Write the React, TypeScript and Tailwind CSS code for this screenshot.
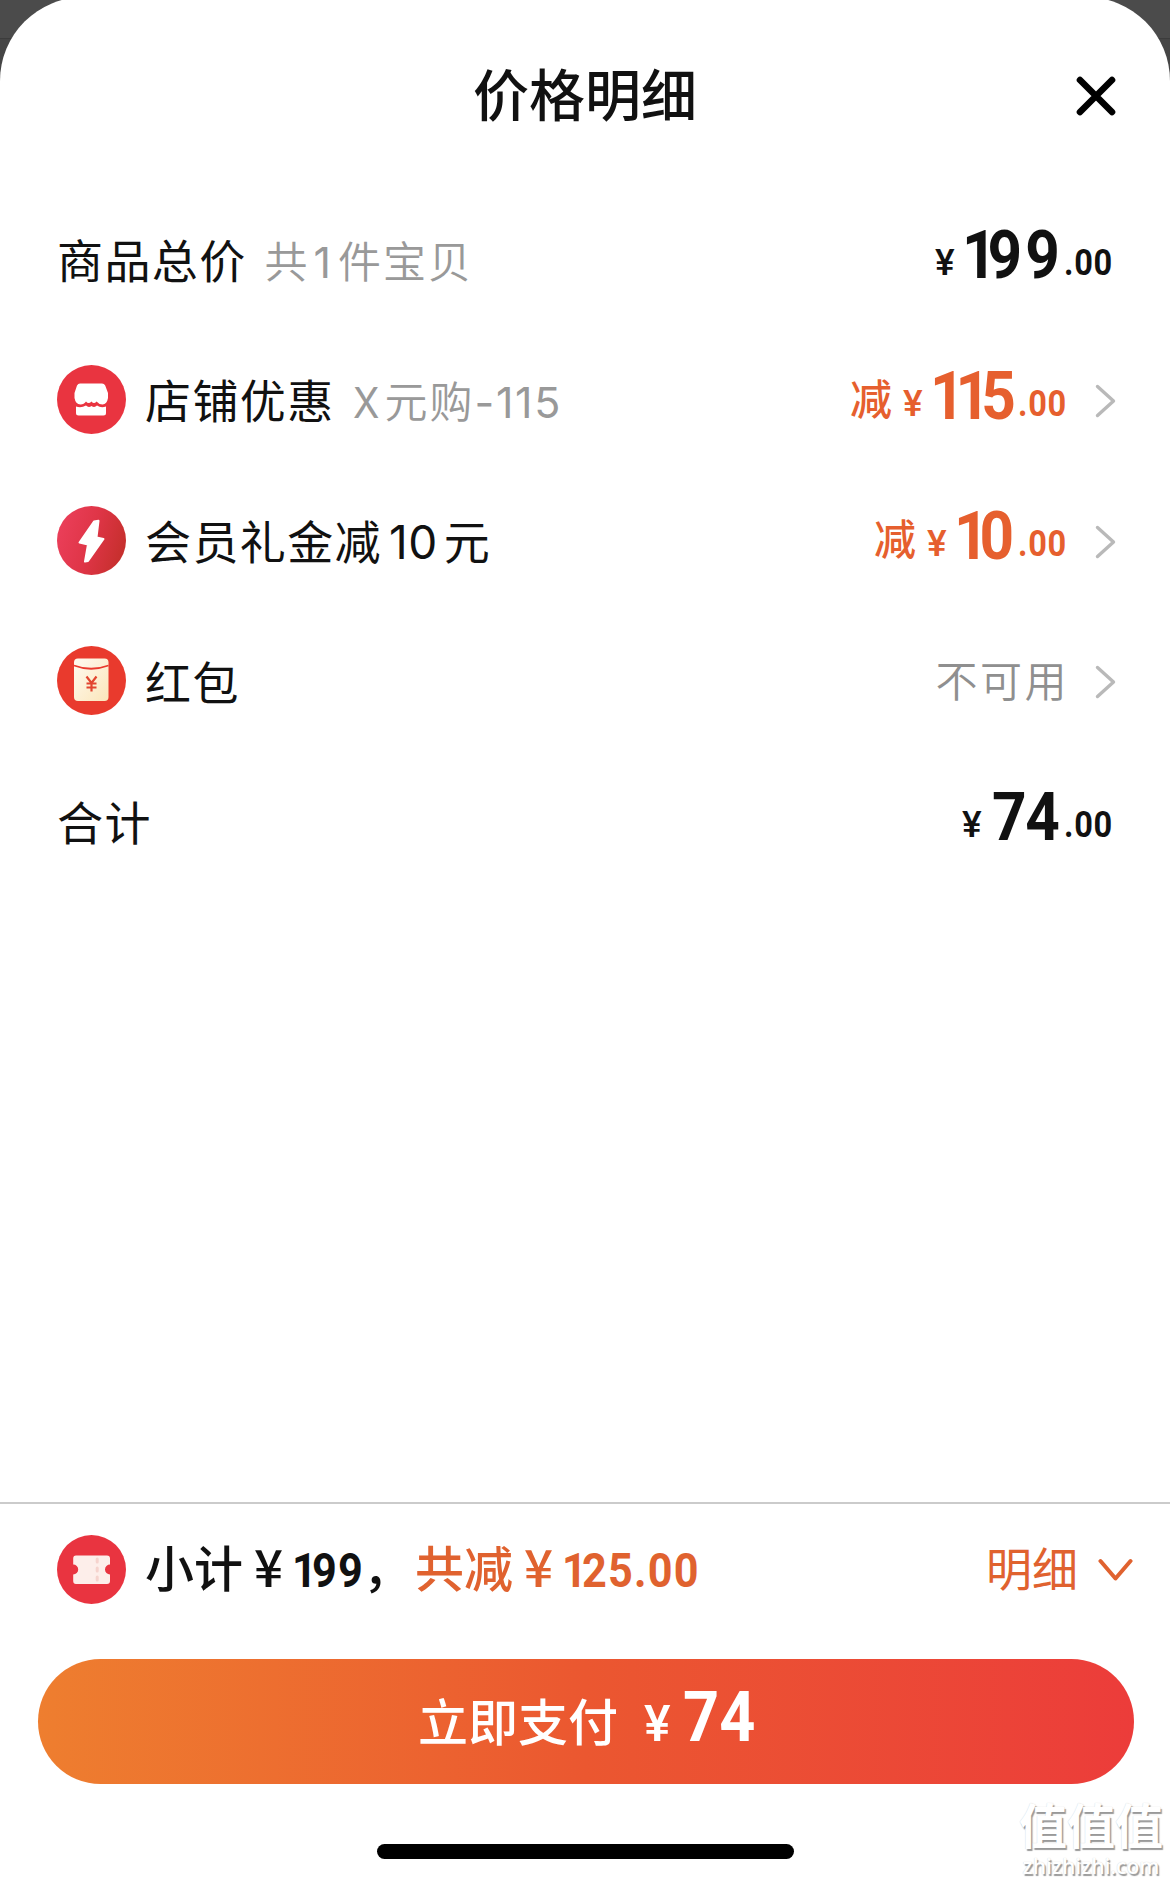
import React from "react";

const CJK = "font-['Inter','Noto_Sans_CJK_SC',sans-serif]";
const NUM = "font-['Roboto','Noto_Sans_CJK_SC',sans-serif]";

/* Condensed numerals; the digit 1 is set tighter than the others. */
function Digits({ value, box, one }: { value: string; box: string; one: string }) {
  return (
    <span className={`inline-block whitespace-nowrap ${box}`}>
      <span className="inline-block origin-left scale-x-90">
        {value.split("").map((c, i) => (c === "1" ? <span key={i} className={one}>{c}</span> : c))}
      </span>
    </span>
  );
}

function Chevron() {
  return (
    <svg className="ml-[28px] h-[34px] w-[22px] shrink-0" viewBox="0 0 22 34" fill="none" stroke="#b9b9b9" strokeWidth="3.4" strokeLinecap="round" strokeLinejoin="round">
      <path d="M2.5 2.5L18.5 17L2.5 31.5" />
    </svg>
  );
}

function Price({ value, prefix, box }: { value: string; prefix?: string; box: string }) {
  return (
    <div className={`flex items-baseline leading-[60px] ${NUM}`}>
      {prefix && <span className="relative -top-[4px] mr-[11px] text-[42px] font-medium">{prefix}</span>}
      <span className="relative -top-[3px] w-[27px] text-[37px] font-medium">¥</span>
      <Digits value={value} box={`text-[67px] font-bold ${box}`} one="tracking-[-10px]" />
      <span className="relative -top-[3px] inline-block w-[49px] whitespace-nowrap text-[37px] font-bold">
        <span className="inline-block origin-left scale-x-[0.88] tracking-[0.8px]">.00</span>
      </span>
    </div>
  );
}

function ShopIcon() {
  return (
    <svg className="size-[69px] shrink-0" viewBox="0 0 69 69">
      <circle cx="34.5" cy="34.5" r="34.5" fill="#e93440" />
      <path d="M23 18.5H45Q47.200 18.500 48.200 20.500L51 28V33Q50 39 45.500 39.500Q42 39.500 39.500 36.500Q37 39.500 34.500 36.500Q31.500 39.500 29 36.500Q27 39.500 23.500 39.500Q18.500 39 17.500 33V28L20 20.500Q21 18.500 23 18.500Z" fill="#fff" />
      <path d="M19 41.500Q24 43.500 29 40.500Q31.500 43 34.500 41Q37.500 43 40 40.500Q44 43.500 49 41.500V48Q49 50.500 46.500 50.500H21.500Q19 50.500 19 48Z" fill="#fff" />
    </svg>
  );
}

function BoltIcon() {
  return (
    <svg className="size-[69px] shrink-0" viewBox="0 0 69 69">
      <defs>
        <linearGradient id="bolt" x1="0" x2="1" y1="0.3" y2="0.6">
          <stop offset="0" stopColor="#eb3f5a" />
          <stop offset="0.5" stopColor="#df3547" />
          <stop offset="1" stopColor="#c52f2c" />
        </linearGradient>
      </defs>
      <circle cx="34.500" cy="34.500" r="34.500" fill="url(#bolt)" />
      <path d="M37 15.500L41.500 14.800L39.500 31.500L46.500 33L31 55L28 55.500L31 38.500L22.500 36.500Z" fill="#fff" stroke="#fff" strokeWidth="2" strokeLinejoin="round" />
    </svg>
  );
}

function EnvelopeIcon() {
  return (
    <svg className="size-[69px] shrink-0" viewBox="0 0 69 69">
      <defs>
        <linearGradient id="env" x1="0" x2="1" y1="0" y2="1">
          <stop offset="0" stopColor="#fffaf0" />
          <stop offset="1" stopColor="#fbe6ba" />
        </linearGradient>
      </defs>
      <circle cx="34.500" cy="34.500" r="34.500" fill="#e93a2d" />
      <rect x="17" y="12.500" width="34.500" height="42.500" rx="4" fill="url(#env)" />
      <path d="M17 19.500Q34 26 51.500 19.500" fill="none" stroke="#e93a2d" strokeWidth="1.800" />
      <path d="M29.500 30.500L34.500 37L39.500 30.500M34.500 37V45.500M29.500 37.500H39.500M29.500 41.500H39.500" fill="none" stroke="#e2452f" strokeWidth="2.200" />
    </svg>
  );
}

function TicketIcon() {
  return (
    <svg className="size-[69px] shrink-0" viewBox="0 0 69 69">
      <circle cx="34.500" cy="34.500" r="34.500" fill="#e93440" />
      <path d="M19 20.500H50Q53 20.500 53 23.500V29.500A5 5 0 0 0 53 39.500V46Q53 49 50 49H19Q16.200 49 16.200 46V39.500A5 5 0 0 0 16.200 29.500V23.500Q16.200 20.500 19 20.500Z" fill="#fdeeea" />
      <path d="M40.200 24V27M40.200 33V36M40.200 42V45" stroke="#f6d3cd" strokeWidth="3" strokeLinecap="round" />
    </svg>
  );
}

function Row({ icon, left, right }: { icon?: React.ReactNode; left: React.ReactNode; right: React.ReactNode }) {
  return (
    <div className="flex h-[140.5px] items-center pl-[57px] text-[46px] leading-[60px]">
      {icon}
      <div className={`flex items-baseline whitespace-nowrap pt-[4px] ${icon ? "ml-[19px]" : ""}`}>{left}</div>
      <div className="ml-auto flex items-center pt-[3px]">{right}</div>
    </div>
  );
}

export default function App() {
  return (
    <div className={`relative h-[1883px] w-[1170px] overflow-hidden bg-[#454545] text-[#111] ${CJK}`}>
      <div className="h-[39px] border-b border-[#3c3c3c] bg-[#4b4b4b]" />
      <div className="relative -mt-[42px] flex h-[1886px] flex-col rounded-t-[84px] bg-white">
        <header className="relative flex h-[192px] items-center justify-center">
          <h1 className="pt-[5px] text-[56px] font-medium leading-[64px]">价格明细</h1>
          <svg className="absolute right-[54px] top-[79px] size-[40px]" viewBox="0 0 40 40" fill="none" stroke="#000" strokeWidth="6.6" strokeLinecap="round">
            <path d="M4 4L36 36M36 4L4 36" />
          </svg>
        </header>

        <main className="flex-1">
          <Row
            left={
              <>
                <span className="tracking-[1.400px]">商品总价</span>
                <span className="ml-[18px] text-[43px] font-[350] tracking-[2px] text-[#999]">
                  共<span className="ml-[4px] mr-[5px] font-normal">1</span>件宝贝
                </span>
              </>
            }
            right={<div className="mr-[57px]"><Price value="199" box="w-[102px] tracking-[3.5px]" /></div>}
          />
          <Row
            icon={<ShopIcon />}
            left={
              <>
                <span className="tracking-[1.400px]">店铺优惠</span>
                <span className="ml-[18px] text-[43px] font-[350] tracking-[2px] text-[#999]">
                  <span className="mr-[3px] inline-block w-[29px]"><span className="inline-block origin-left scale-x-90 font-normal">X</span></span>元购<span className="font-normal tracking-[1.6px]">-115</span>
                </span>
              </>
            }
            right={
              <div className="mr-[53px] flex items-center text-[#e65f2e]">
                <Price prefix="减" value="115" box="w-[88px] tracking-[3.5px]" />
                <Chevron />
              </div>
            }
          />
          <Row
            icon={<BoltIcon />}
            left={
              <span className="tracking-[1.400px]">
                会员礼金减<span className="ml-[7px] mr-[6px] tracking-[0.5px]">10</span>元
              </span>
            }
            right={
              <div className="mr-[53px] flex items-center text-[#e65f2e]">
                <Price prefix="减" value="10" box="w-[64px] tracking-[3.5px]" />
                <Chevron />
              </div>
            }
          />
          <Row
            icon={<EnvelopeIcon />}
            left={<span className="tracking-[1.400px]">红包</span>}
            right={
              <div className="mr-[53px] flex items-center">
                <span className="-mr-[2px] text-[42px] font-[350] tracking-[2.5px] text-[#8f8f8f]">不可用</span>
                <Chevron />
              </div>
            }
          />
          <Row
            left={<span className="tracking-[1.400px]">合计</span>}
            right={<div className="mr-[57px]"><Price value="74" box="w-[75px] pl-[3px] tracking-[-1.5px]" /></div>}
          />
        </main>

        <footer className="h-[381px] border-t-2 border-[#cbcbcb]">
          <div className="flex h-[131px] items-center pl-[57px] pr-[37px]">
            <TicketIcon />
            <div className={`ml-[19px] flex items-baseline whitespace-nowrap pb-[3px] text-[49px] font-medium leading-[60px] ${NUM}`}>
              <span>小计</span>
              <span className="ml-[11px] w-[38px] font-['Noto_Sans_CJK_SC',sans-serif] text-[51px]">¥</span>
              <Digits value="199" box="w-[71px] text-[48px] font-bold tracking-[1.3px]" one="tracking-[-5.2px]" />
              <span className="w-[52px]">，</span>
              <span className="text-[#e0622f]">共减</span>
              <span className="ml-[11px] w-[38px] font-['Noto_Sans_CJK_SC',sans-serif] text-[51px] text-[#e0622f]">¥</span>
              <Digits value="125.00" box="text-[48px] font-bold tracking-[1.3px] text-[#e0622f]" one="tracking-[-5.2px]" />
            </div>
            <span className="ml-auto pb-[2px] text-[46px] leading-[60px] text-[#e0622f]">明细</span>
            <svg className="ml-[20px] h-[24px] w-[35px]" viewBox="0 0 35 24" fill="none" stroke="#e0622f" strokeWidth="4" strokeLinecap="round" strokeLinejoin="round">
              <path d="M2.500 3L17.500 20.500L32.500 3" />
            </svg>
          </div>
          <button className={`ml-[38px] mt-[24px] flex h-[125px] w-[1096px] items-baseline rounded-full bg-linear-to-r from-[#ee7e2f] via-[#eb5730] to-[#ec3c3a] pl-[380px] leading-[117px] text-white ${NUM}`}>
            <span className="text-[50px] font-medium">立即支付</span>
            <span className="ml-[26px] w-[39px] text-left text-[50px] font-medium">¥</span>
            <Digits value="74" box="text-[70px] font-bold tracking-[0px]" one="" />
          </button>
          <div className="mx-auto mt-[60px] h-[15px] w-[417px] rounded-full bg-black" />
        </footer>

        <div className="absolute bottom-[5px] right-[7px] w-[144px] text-center text-white [text-shadow:1.5px_1.5px_1px_#999,0_0_1px_#ccc]">
          <div className="text-[48px] font-bold leading-[54px]">值值值</div>
          <div className="font-['Open_Sans',sans-serif] text-[21px] font-semibold leading-[24px]">zhizhizhi.com</div>
        </div>
      </div>
    </div>
  );
}
